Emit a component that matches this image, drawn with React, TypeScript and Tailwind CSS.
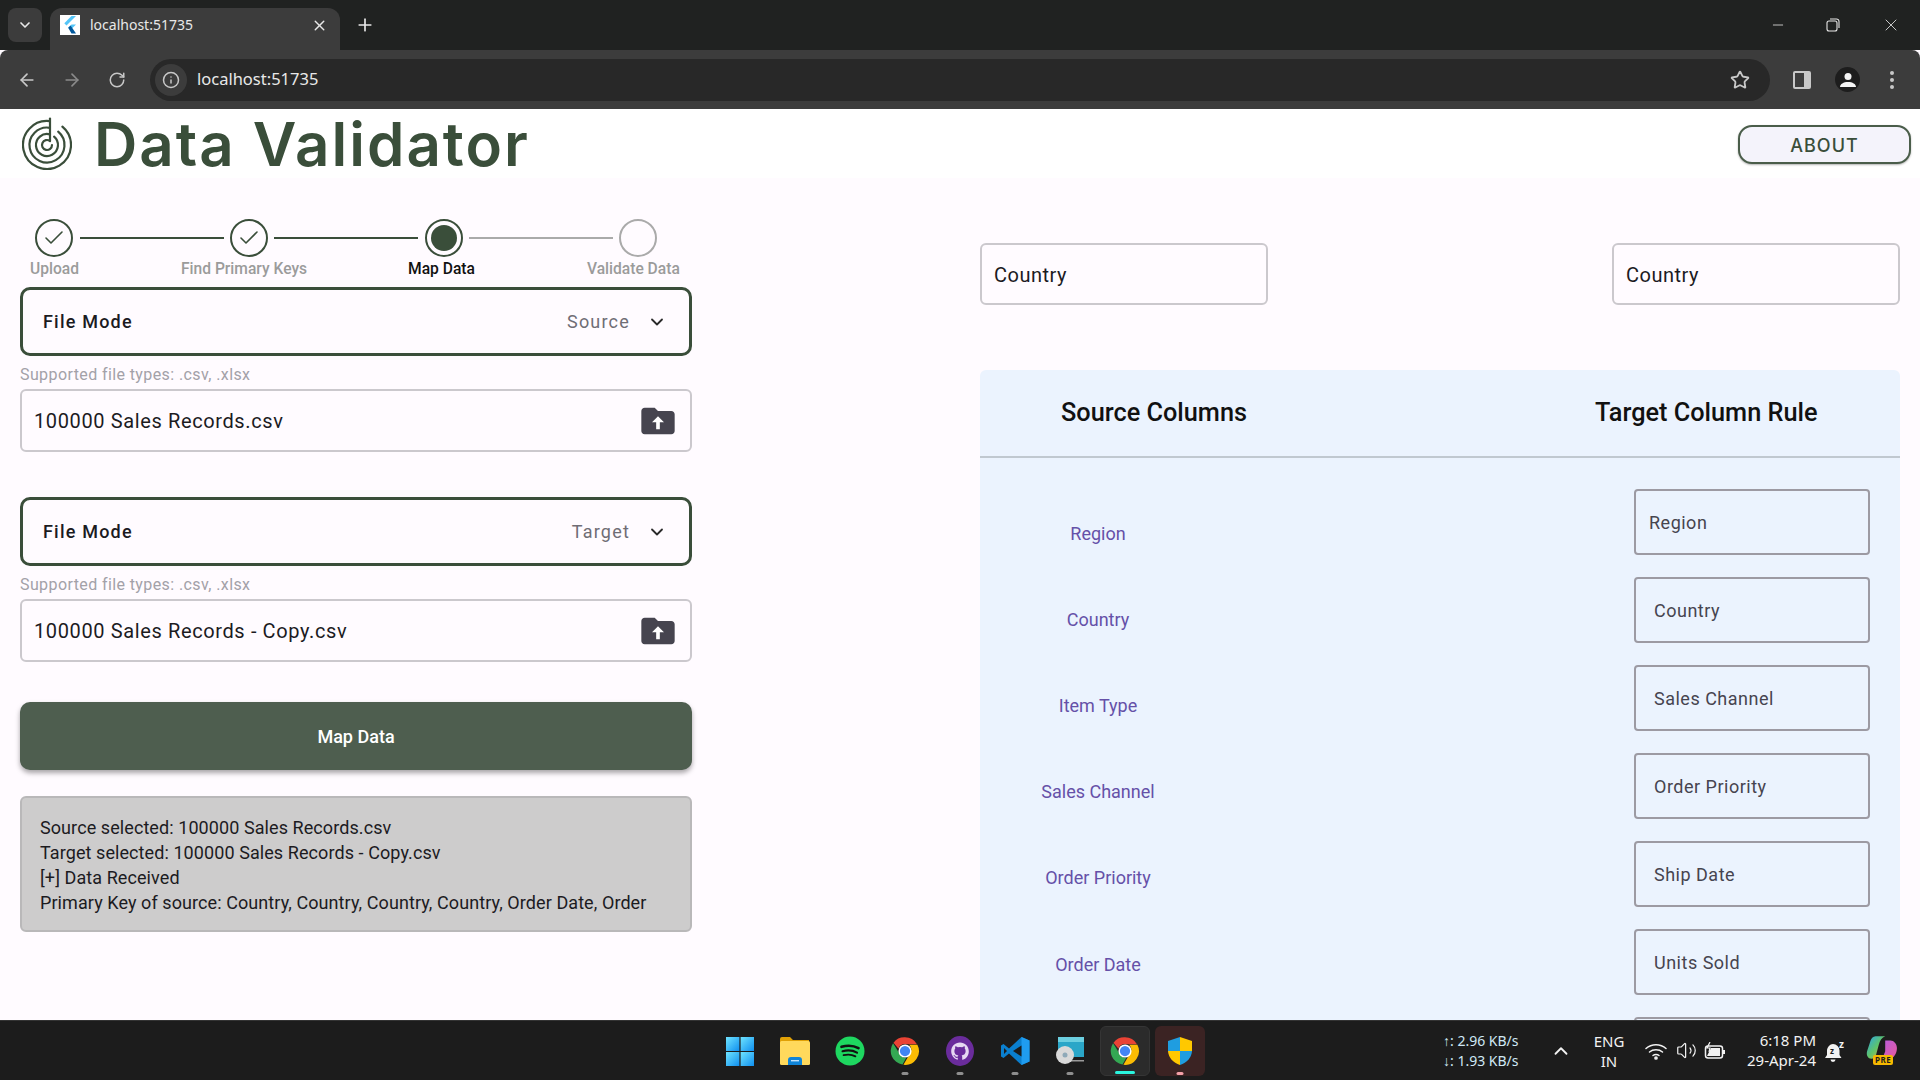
import { Check, ChevronDown, ChevronUp, Plus, X, ArrowLeft, ArrowRight, RotateCw, Star, Info, Minus, Volume2 } from "lucide-react";

const roboto = "font-['Roboto',sans-serif]";
const segoe = "font-['Noto_Sans',sans-serif]";

function FolderUpload() {
  return (
    <svg width="40" height="40" viewBox="0 0 24 24">
      <path
        fill="#46444f"
        d="M20 6h-8l-2-2H4c-1.1 0-2 .9-2 2v12c0 1.1.9 2 2 2h16c1.1 0 2-.9 2-2V8c0-1.1-.9-2-2-2z"
      />
      <path fill="#fff" d="M12 9.2l-3.6 3.6h2.5V17h2.2v-4.200h2.5z" />
    </svg>
  );
}

function Logo() {
  return (
    <svg width="50" height="53" viewBox="0 0 50 53" fill="none" stroke="#3a4e3a" strokeWidth="2.2" strokeLinecap="round">
      <path d="M28 1.500V24" />
      <path d="M28 4.200A24 24 0 1 0 40.400 9.600" />
      <path d="M28 10.800A17.500 17.500 0 1 0 36.200 14.600" />
      <path d="M28 17.400A11 11 0 1 0 32.100 19.600" />
      <path d="M28 24A5 5 0 1 0 30 28" />
    </svg>
  );
}

function ChromeIcon() {
  return (
    <svg width="30" height="30" viewBox="0 0 48 48">
      <path fill="#ea4335" d="M24 2a22 22 0 0 1 19.050 11H24a11 11 0 0 0-10.400 7.400L5.600 10.600A22 22 0 0 1 24 2z" />
      <path fill="#34a853" d="M4.950 11.500 15 28a11 11 0 0 0 11 6.800L20 45.600A22 22 0 0 1 4.950 11.500z" />
      <path fill="#fbbc04" d="M43.800 14A22 22 0 0 1 21.500 46L32 28a11 11 0 0 0-1.500-14z" />
      <circle cx="24" cy="24" r="10.500" fill="#fff" />
      <circle cx="24" cy="24" r="8.200" fill="#4285f4" />
    </svg>
  );
}

const TaskIcon = ({ children, dot, active, bg }: { children: React.ReactNode; dot?: string; active?: boolean; bg?: string }) => (
  <div className={`relative w-[50px] h-[50px] mx-[2.5px] rounded-md flex items-center justify-center ${bg ?? ""}`}>
    {children}
    {dot && (
      <span className={`absolute bottom-[1px] left-1/2 -translate-x-1/2 h-[3px] rounded-full ${active ? "w-5" : "w-[7px]"} ${dot}`} />
    )}
  </div>
);

function Taskbar() {
  return (
    <footer className={`relative h-[60px] shrink-0 bg-[#1c1c1c] border-t border-[#333] flex items-center text-[#f2f2f2] ${segoe}`}>
      <div className="flex items-center ml-[712px]">
        <TaskIcon>
          <svg width="30" height="30" viewBox="0 0 30 30">
            <defs>
              <linearGradient id="win" x1="0" y1="0" x2="1" y2="1">
                <stop offset="0" stopColor="#6fe4ff" />
                <stop offset="1" stopColor="#0f8fef" />
              </linearGradient>
            </defs>
            <rect x="1" y="1" width="13.4" height="14" fill="url(#win)" />
            <rect x="15.6" y="1" width="13.4" height="14" fill="url(#win)" />
            <rect x="1" y="16" width="13.4" height="14" fill="url(#win)" />
            <rect x="15.6" y="16" width="13.4" height="14" fill="url(#win)" />
          </svg>
        </TaskIcon>
        <TaskIcon>
          <svg width="32" height="30" viewBox="0 0 32 30">
            <path fill="#e0a106" d="M1 3a2 2 0 0 1 2-2h8l3 3h16v6H1z" />
            <rect x="1" y="5" width="30" height="24" rx="1.5" fill="#ffd95c" />
            <path fill="#0f84d8" d="M9 29v-5a3 3 0 0 1 3-3h8a3 3 0 0 1 3 3v5z" />
            <rect x="12" y="24" width="8" height="1.4" fill="#bfe3ff" />
          </svg>
        </TaskIcon>
        <TaskIcon>
          <svg width="30" height="30" viewBox="0 0 30 30" fill="none" stroke="#111" strokeLinecap="round">
            <circle cx="15" cy="15" r="14.5" fill="#1ed760" stroke="none" />
            <path strokeWidth="2.6" d="M6.500 10.800c6-1.700 12.400-1.200 17 1.400" />
            <path strokeWidth="2.2" d="M7.600 15.200c5-1.300 10.500-.8 14.400 1.400" />
            <path strokeWidth="1.8" d="M8.600 19.200c4.200-1 8.600-.6 11.800 1.200" />
          </svg>
        </TaskIcon>
        <TaskIcon dot="bg-[#8e8e8e]">
          <ChromeIcon />
        </TaskIcon>
        <TaskIcon dot="bg-[#8e8e8e]">
          <svg width="28" height="30" viewBox="0 0 28 30">
            <ellipse cx="14" cy="15" rx="14" ry="15" fill="#6a2c9c" />
            <path
              fill="#e6d8f2"
              d="M14 6.500c-4.900 0-8.800 3.900-8.800 8.800 0 3.900 2.500 7.200 6 8.400.4.100.6-.2.6-.4v-1.500c-2.400.5-3-1-3-1-.4-1-1-1.300-1-1.300-.8-.5.100-.5.100-.5.900.100 1.300.900 1.300.900.800 1.300 2 1 2.600.700.100-.6.300-1 .6-1.200-2-.2-4-1-4-4.400 0-1 .3-1.800.900-2.400-.1-.2-.4-1.100.100-2.300 0 0 .7-.2 2.400.900a8.300 8.300 0 0 1 4.400 0c1.700-1.100 2.400-.9 2.400-.9.500 1.200.2 2.100.1 2.300.6.600.9 1.400.9 2.400 0 3.400-2.100 4.200-4 4.400.3.300.6.800.6 1.600v2.400c0 .2.200.5.600.4 3.500-1.200 6-4.500 6-8.400 0-4.900-3.900-8.800-8.800-8.800z"
            />
          </svg>
        </TaskIcon>
        <TaskIcon dot="bg-[#8e8e8e]">
          <svg width="30" height="30" viewBox="0 0 30 30">
            <path fill="#0a7fcf" d="M21.500 1 29.500 4.500v21L21.500 29 9 17.500 3.500 22 1 20.500V9.500L3.500 8 9 12.500z" />
            <path fill="#1f9cf0" d="M21.500 1 29.500 4.500v21L21.500 29z" />
            <path fill="#1c1c1c" d="M21.500 9.500 13 15l8.500 5.500z" />
            <path fill="#1c1c1c" d="M4 12v6l3-3z" />
          </svg>
        </TaskIcon>
        <TaskIcon dot="bg-[#8e8e8e]">
          <svg width="30" height="30" viewBox="0 0 30 30">
            <rect x="3" y="1" width="26" height="20" fill="#2aa6c8" />
            <rect x="3" y="1" width="26" height="5" fill="#6ccfe0" />
            <rect x="12" y="24" width="17" height="1.5" fill="#9a9a9a" />
            <circle cx="10" cy="19" r="9" fill="#d9d9d9" />
            <circle cx="10" cy="19" r="2.5" fill="#8fa9b8" />
          </svg>
        </TaskIcon>
        <TaskIcon dot="bg-[#2af5df]" active bg="bg-[#2b2b2b] border border-[#353535]">
          <ChromeIcon />
        </TaskIcon>
        <TaskIcon dot="bg-[#f4a0a8]" bg="bg-[#3b2323]">
          <svg width="26" height="30" viewBox="0 0 26 30">
            <path fill="#1f9de0" d="M13 1 1 5v10h12z" />
            <path fill="#ffc800" d="M13 1l12 4v10H13z" />
            <path fill="#ffc800" d="M1 15h12v14C6 26.500 1.500 22 1 15z" />
            <path fill="#1f9de0" d="M25 15H13v14c7-2.500 11.500-7 12-14z" />
          </svg>
        </TaskIcon>
      </div>

      <div className="ml-[236px] w-[76px] text-[14px] leading-[20px] text-[#cfe8f5] shrink-0">
        <div className="whitespace-nowrap">↑: 2.96 KB/s</div>
        <div className="whitespace-nowrap">↓: 1.93 KB/s</div>
      </div>
      <ChevronUp size={22} className="ml-[31px] shrink-0" />
      <div className="ml-[17px] w-[40px] text-center text-[15px] leading-[20px] shrink-0">
        <div>ENG</div>
        <div>IN</div>
      </div>
      <svg width="22" height="18" viewBox="0 0 22 18" fill="none" stroke="#f2f2f2" strokeWidth="1.5" strokeLinecap="round" className="ml-[16px] shrink-0">
        <path d="M1 6.500c5.500-5 14.500-5 20 0" />
        <path d="M4.500 10c3.500-3 9.500-3 13 0" />
        <path d="M8 13.500c1.500-1.200 4.500-1.200 6 0" />
        <circle cx="11" cy="16" r="1.1" fill="#f2f2f2" />
      </svg>
      <Volume2 size={21} strokeWidth={1.4} className="ml-[9px] shrink-0" />
      <svg width="22" height="18" viewBox="0 0 22 18" fill="none" stroke="#f2f2f2" strokeWidth="1.5" className="ml-[7px] shrink-0">
        <rect x="1.500" y="4" width="17" height="12" rx="2.5" />
        <rect x="19" y="8" width="2" height="4" fill="#f2f2f2" stroke="none" />
        <path d="M3 14 7 6h9v8z" fill="#f2f2f2" stroke="none" />
        <path d="M6 0 3 6h3l-1 4" strokeWidth="1.2" />
      </svg>
      <div className="ml-[14px] mb-[2px] w-[76px] text-right text-[15px] leading-[20px] whitespace-nowrap shrink-0">
        <div>6:18 PM</div>
        <div>29-Apr-24</div>
      </div>
      <svg width="24" height="26" viewBox="0 0 24 26" className="ml-[8px] shrink-0">
        <path fill="#f2f2f2" d="M9 6a6.500 6.500 0 0 1 6.500 6.500V17l2 3H1l2-3v-5A6.500 6.500 0 0 1 9 6zM6.500 21.500h5a2.500 2.500 0 0 1-5 0z" />
        <text x="6" y="16" fontSize="8" fontWeight="700" fill="#1c1c1c" fontFamily="Noto Sans">z</text>
        <text x="15" y="10" fontSize="10" fontWeight="700" fill="#f2f2f2" fontFamily="Noto Sans">z</text>
      </svg>
      <div className="relative ml-[18px] w-[32px] h-[32px] shrink-0">
        <svg width="32" height="26" viewBox="0 0 30 24">
          <defs>
            <linearGradient id="cop" x1="0" y1="0" x2="1" y2="1">
              <stop offset="0" stopColor="#2aa3e8" />
              <stop offset="0.5" stopColor="#5fc46a" />
              <stop offset="1" stopColor="#e8b23a" />
            </linearGradient>
            <linearGradient id="cop2" x1="0" y1="0" x2="1" y2="1">
              <stop offset="0" stopColor="#b45be0" />
              <stop offset="1" stopColor="#e85a9c" />
            </linearGradient>
          </defs>
          <path fill="url(#cop)" d="M9 1h9c-3 1-5 4-6 8l-3 11c-.5 1-2 2-4 2-3 0-5-3-4-7l3-9c.7-3 2.500-5 5-5z" />
          <path fill="url(#cop2)" d="M18 5h5c3 0 6 3 6 7 0 5-3 10-7 10h-9c3-1 4-4 5-7z" />
        </svg>
        <span className="absolute left-[7px] top-[20px] px-[2px] rounded-[2px] bg-[#f5b800] text-[#1c1c1c] text-[8px] leading-[10px] font-bold tracking-[0.5px]">
          PRE
        </span>
      </div>
    </footer>
  );
}

function BrowserChrome() {
  return (
    <div className={`shrink-0 ${segoe}`}>
      <div className="h-[50px] bg-[#202221] flex items-end text-[#e8e8e8] relative">
        <div className="w-[34px] h-[34px] ml-2 mb-2 rounded-lg bg-[#3c3c3c] flex items-center justify-center">
          <ChevronDown size={16} strokeWidth={2.5} />
        </div>
        <div className="w-[290px] h-[42px] ml-2 rounded-t-xl bg-[#3c3c3c] flex items-center pl-[10px] pr-[12px] pb-[8px]">
          <div className="w-5 h-5 bg-white flex items-center justify-center shrink-0">
            <svg width="14" height="18" viewBox="0 0 14 18">
              <path fill="#54c5f8" d="M8.500 0H13L3.500 9.500 1.300 7.300z" />
              <path fill="#54c5f8" d="M8.500 8.500H13L7.500 14l-2.300-2.300z" />
              <path fill="#01579b" d="M5.200 11.700 7.500 9.500 13 17.500H8.500z" />
            </svg>
          </div>
          <span className="ml-[10px] text-[14px] text-[#e8e8e8] leading-none">localhost:51735</span>
          <X size={17} className="ml-auto" />
        </div>
        <Plus size={20} className="ml-[15px] mb-[15px]" />
        <Minus size={16} strokeWidth={1.2} className="ml-auto mb-[17px]" />
        <svg width="14" height="14" viewBox="0 0 14 14" fill="none" stroke="#e8e8e8" strokeWidth="1.1" className="ml-[40px] mb-[18px]">
          <rect x="1" y="3" width="10" height="10" rx="2" />
          <path d="M4 1h6.500A2.500 2.500 0 0 1 13 3.500V10" />
        </svg>
        <X size={20} strokeWidth={1} className="ml-[41px] mr-[19px] mb-[15px]" />
      </div>
      <div className="h-[59px] bg-[#3c3c3c] rounded-t-lg flex items-center text-[#c8c8c8]">
        <ArrowLeft size={20} className="ml-[17px]" />
        <ArrowRight size={20} className="ml-[25px] text-[#8a8a8a]" />
        <RotateCw size={18} className="ml-[26px]" />
        <div className="w-[1620px] h-[42px] ml-[24px] rounded-full bg-[#282828] flex items-center pl-[5px]">
          <div className="w-8 h-8 rounded-full bg-[#3c3c3c] flex items-center justify-center">
            <Info size={18} />
          </div>
          <span className="ml-[10px] text-[16.5px] text-[#e8e8e8]">localhost:51735</span>
          <Star size={20} strokeWidth={2.2} className="ml-auto mr-[20px]" />
        </div>
        <svg width="18" height="18" viewBox="0 0 18 18" className="ml-[23px]">
          <rect width="18" height="18" rx="2" fill="#c8c8c8" />
          <rect x="2" y="2" width="9" height="14" fill="#3c3c3c" />
        </svg>
        <div className="w-[25px] h-[25px] ml-[24px] rounded-full bg-[#1d1d1d] flex items-center justify-center">
          <svg width="16" height="16" viewBox="0 0 16 16" fill="#f4f4f4">
            <circle cx="8" cy="4.5" r="3.5" />
            <path d="M0 15c0-3 3.500-5 8-5s8 2 8 5z" />
          </svg>
        </div>
        <div className="ml-[30px] flex flex-col gap-[3px]">
          <span className="w-1 h-1 rounded-full bg-[#c8c8c8]" />
          <span className="w-1 h-1 rounded-full bg-[#c8c8c8]" />
          <span className="w-1 h-1 rounded-full bg-[#c8c8c8]" />
        </div>
      </div>
    </div>
  );
}

function Stepper() {
  const lineGreen = "h-[2px] w-[144px] bg-[#3a4e3a]";
  return (
    <div className="pt-[41px]">
      <div className="flex items-center pl-[15px]">
        <div className="w-[38px] h-[38px] rounded-full border-2 border-[#3a4e3a] flex items-center justify-center text-[#3a4e3a]">
          <Check size={24} strokeWidth={1.6} />
        </div>
        <div className={`${lineGreen} ml-[7px]`} />
        <div className="w-[38px] h-[38px] ml-[6px] rounded-full border-2 border-[#3a4e3a] flex items-center justify-center text-[#3a4e3a]">
          <Check size={24} strokeWidth={1.6} />
        </div>
        <div className={`${lineGreen} ml-[6px]`} />
        <div className="w-[38px] h-[38px] ml-[7px] rounded-full border-2 border-[#3a4e3a] flex items-center justify-center">
          <div className="w-[26px] h-[26px] rounded-full bg-[#3a4e3a]" />
        </div>
        <div className="h-[2px] w-[144px] ml-[6px] bg-[#aaaaaa]" />
        <div className="w-[38px] h-[38px] ml-[6px] rounded-full border-2 border-[#aaaaaa]" />
      </div>
      <div className={`flex mt-[1px] pl-[10px] text-[15.6px] leading-[22px] font-medium text-[#9b9b9b] ${roboto}`}>
        <span>Upload</span>
        <span className="ml-[102px]">Find Primary Keys</span>
        <span className="ml-[101px] text-[#111]">Map Data</span>
        <span className="ml-[112px]">Validate Data</span>
      </div>
    </div>
  );
}

function FileBlock({ mode, file }: { mode: string; file: string }) {
  return (
    <div>
      <div className={`h-[69px] rounded-[10px] border-[3px] border-[#3a4e3a] flex items-center pl-[20px] pr-[22px] ${roboto}`}>
        <span className="text-[18px] font-medium tracking-[1.2px] text-[#1c1b1f]">File Mode</span>
        <span className="ml-auto text-[18px] tracking-[1.2px] text-[#6f6d75]">{mode}</span>
        <ChevronDown size={20} strokeWidth={2.2} className="ml-[17px] text-[#2a2a2a]" />
      </div>
      <div className={`h-[33px] flex items-end pb-[4px] text-[16px] tracking-[0.4px] leading-5 text-[#a3a1a8] ${roboto}`}>
        Supported file types: .csv, .xlsx
      </div>
      <div className={`h-[63px] rounded-[6px] border-2 border-[#cbc8cd] flex items-center pl-[12px] pr-[12px] ${roboto}`}>
        <span className="text-[20px] text-[#1c1b1f] tracking-[0.62px]">{file}</span>
        <span className="ml-auto flex">
          <FolderUpload />
        </span>
      </div>
    </div>
  );
}

function LeftPanel() {
  return (
    <section className="w-[672px] ml-[20px] shrink-0">
      <Stepper />
      <div className="mt-[7px]">
        <FileBlock mode="Source" file="100000 Sales Records.csv" />
      </div>
      <div className="mt-[45px]">
        <FileBlock mode="Target" file="100000 Sales Records - Copy.csv" />
      </div>
      <button className={`mt-[40px] w-full h-[68px] rounded-[10px] bg-[#4e5e4f] text-white text-[18px] font-medium shadow-[0_3px_5px_rgba(0,0,0,0.35)] ${roboto}`}>
        Map Data
      </button>
      <div className={`mt-[26px] h-[136px] rounded-[6px] bg-[#cdcccc] border-2 border-[#b9b8b9] px-[18px] py-[17px] text-[18px] tracking-[0.08px] leading-[25px] text-[#1c1b1f] whitespace-nowrap ${roboto}`}>
        <div>Source selected: 100000 Sales Records.csv</div>
        <div>Target selected: 100000 Sales Records - Copy.csv</div>
        <div>[+] Data Received</div>
        <div>Primary Key of source: Country, Country, Country, Country, Order Date, Order</div>
      </div>
    </section>
  );
}

const sourceCols = ["Region", "Country", "Item Type", "Sales Channel", "Order Priority", "Order Date"];
const targetCols = ["Region", "Country", "Sales Channel", "Order Priority", "Ship Date", "Units Sold", ""];

function RightPanel() {
  return (
    <section className="w-[920px] ml-[288px] shrink-0 min-h-0">
      <div className={`flex justify-between pt-[65px] ${roboto}`}>
        {["Country", "Country"].map((v, i) => (
          <div key={i} className="w-[288px] h-[62px] rounded-[6px] border-2 border-[#cbc8cd] flex items-center pl-[12px] pt-[1px] text-[20px] tracking-[0.5px] text-[#1c1b1f]">
            {v}
          </div>
        ))}
      </div>
      <div className="mt-[65px] bg-[#ebf3fe] rounded-t-[6px] h-[700px]">
        <div className={`h-[88px] border-b-2 border-[#c0c8d0] flex items-center text-[25.3px] font-medium text-[#111] ${roboto}`}>
          <span className="ml-[81px]">Source Columns</span>
          <span className="ml-[348px]">Target Column Rule</span>
        </div>
        <div className="flex">
          <div className={`w-[236px] pt-[32px] text-[18px] text-[#6550a8] ${roboto}`}>
            {sourceCols.map((c) => (
              <div key={c} className="h-[86.2px] flex items-center justify-center">
                {c}
              </div>
            ))}
          </div>
          <div className={`ml-auto mr-[30px] w-[236px] pt-[31px] flex flex-col gap-[22px] ${roboto}`}>
            {targetCols.map((c, i) => (
              <div
                key={i}
                className="h-[66px] rounded-[4px] border-2 border-[#9c9aa3] flex items-center pl-[18px] text-[18px] tracking-[0.5px] text-[#46444f] first:pl-[13px]"
              >
                {c}
              </div>
            ))}
          </div>
        </div>
      </div>
    </section>
  );
}

export default function App() {
  return (
    <div className="h-screen w-full flex flex-col overflow-hidden bg-[#fffbff]">
      <BrowserChrome />
      <div className="flex-1 min-h-0 overflow-hidden">
        <header className="h-[69px] bg-white flex items-center pl-[22px] pr-[9px]">
          <Logo />
          <h1 className="ml-[22px] text-[60px] leading-none font-semibold text-[#3a4e3a] tracking-[2px] font-['Inter',sans-serif]">
            Data Validator
          </h1>
          <button className="ml-auto mt-[2px] pt-[2px] w-[173px] h-[39px] rounded-[14px] border-2 border-[#4a5d4a] bg-[#f4f3fb] text-[18px] font-medium text-[#3a4e3a] tracking-[1px] font-['Inter',sans-serif] shadow-[0_1px_2px_rgba(0,0,0,0.3)]">
            ABOUT
          </button>
        </header>
        <main className="flex">
          <LeftPanel />
          <RightPanel />
        </main>
      </div>
      <Taskbar />
    </div>
  );
}
